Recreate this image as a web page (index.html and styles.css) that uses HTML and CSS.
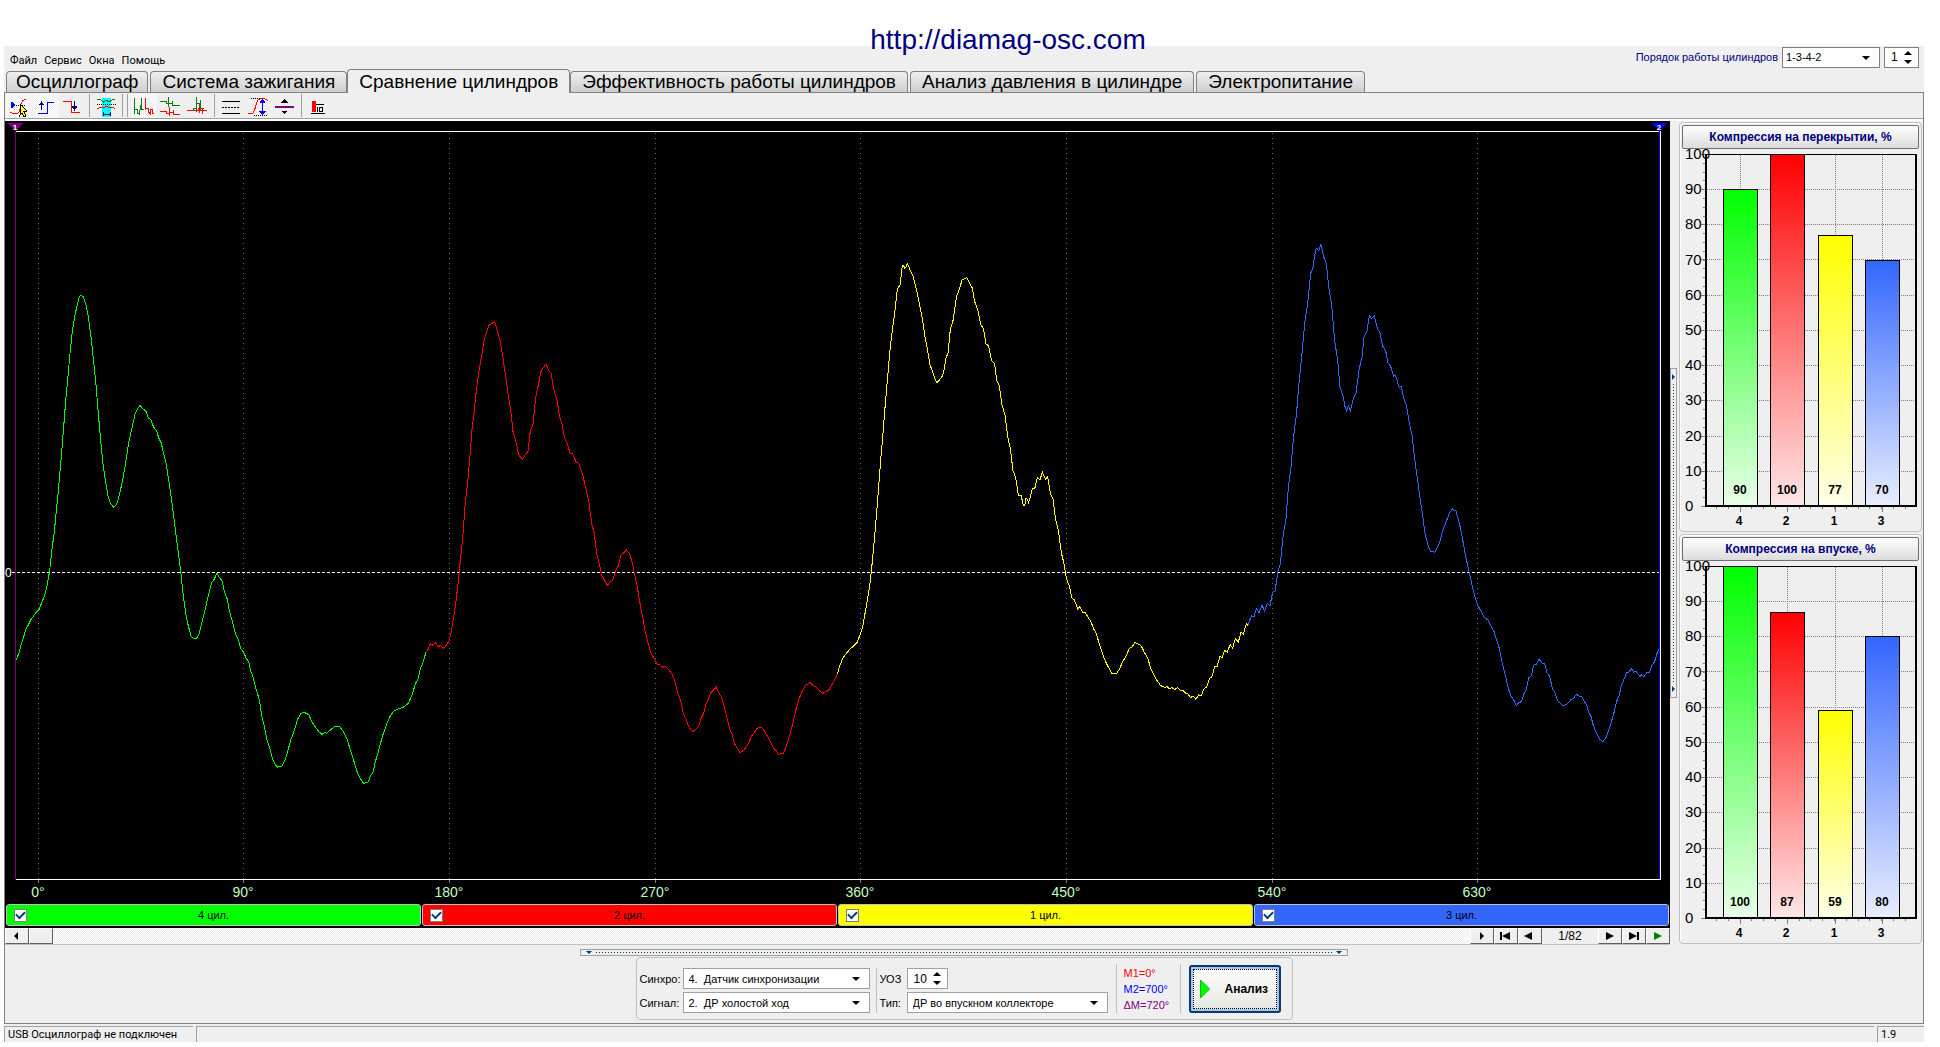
FILE: index.html
```html
<!DOCTYPE html>
<html lang="ru">
<head>
<meta charset="utf-8">
<title>Сравнение цилиндров</title>
<link rel="stylesheet" href="styles.css">
</head>
<body>
<div class="app">
  <header class="top">
    <nav class="menu">
      <a href="#">Файл</a><a href="#">Сервис</a><a href="#">Окна</a><a href="#">Помощь</a>
    </nav>
    <a class="site" href="#">http://diamag-osc.com</a>
    <div class="order">
      <label for="order">Порядок работы цилиндров</label>
      <span class="combo order-combo"><select id="order"><option>1-3-4-2</option></select></span>
      <span class="spin order-spin"><input type="text" value="1" aria-label="Номер цилиндра"></span>
    </div>
  </header>

  <div class="tabs" role="tablist">
    <button class="tab" role="tab">Осциллограф</button>
    <button class="tab" role="tab">Система зажигания</button>
    <button class="tab active" role="tab" aria-selected="true">Сравнение цилиндров</button>
    <button class="tab" role="tab">Эффективность работы цилиндров</button>
    <button class="tab" role="tab">Анализ давления в цилиндре</button>
    <button class="tab" role="tab">Электропитание</button>
  </div>

  <main class="page">
    <div class="toolbar">
      <button class="tool pressed" aria-label="Синхронизация по курсору"><svg viewBox="18 160 78 72">
        <g fill="none" stroke-width="3"><path stroke="#f00" d="M31 215q10 6 22 4q8-8 9-26q2-14 16-18"/><path stroke="#000" stroke-dasharray="3 3" d="M48 193h30"/></g>
        <path fill="#00f" d="M33 182l15 11l-15 11z"/><path fill="#ff0" stroke="#000" stroke-width="3" d="M61 192l20 19l-9 2l6 13l-6 3l-6-12l-6 7z"/></svg></button>
      <button class="tool pressed" aria-label="Фронт"><svg viewBox="99 160 78 72">
        <g fill="none" stroke="#000080" stroke-width="3"><path d="M124.500 208v-18"/><path stroke="#00f" d="M115 218.500h27.500v-34h20"/></g><path fill="#000080" d="M124.500 181l8 13h-16z"/></svg></button>
      <button class="tool" aria-label="Спад"><svg viewBox="180 160 78 72">
        <g fill="none" stroke="#f00" stroke-width="3"><path d="M189 182.500h26.500v32h25"/><path stroke="#000080" d="M223.500 180v20"/></g><path fill="#000080" d="M215 197h17l-8.500 13z"/></svg></button>
      <i class="sep"></i>
      <button class="tool" aria-label="Наложение"><svg viewBox="280 160 78 72">
        <path fill="#0ff" d="M308 171h26v57h-26z"/><g fill="none" stroke-width="3"><path stroke="green" d="M293 176.500h9l10 8l8-6l8 6l10-8h9"/><path stroke="#000" stroke-dasharray="3 3" d="M293 191.500h55"/><path stroke="#f00" d="M293 205l9-6l9 3l9-6l9 6l9-3l9 6"/><path stroke="#000080" d="M311.500 214v12M332.500 214v12M311 221.500h20"/></g></svg></button>
      <i class="sep double"></i>
      <button class="tool pressed" aria-label="Последовательно"><svg viewBox="391 160 78 72">
        <g fill="none" stroke-width="3"><path stroke="green" d="M401.500 171v49M401.500 205.500h9v12l5 3l7-36v-14M422.500 184v22h6"/><path stroke="#f00" d="M434.500 171v37M434.500 184.500v20h9v10l5 5v-12h6v12h4"/></g></svg></button>
      <button class="tool" aria-label="Раздельно"><svg viewBox="471 160 78 72">
        <g fill="none" stroke-width="3"><path stroke="green" d="M477 182.500h20v5h6v-18v29M503 189.500h12v-9M515.500 180v13h22"/><path stroke="#f00" d="M477 212.500h18v5h9v-18M506.500 213v12M506 216.500h11v-10M517.500 207v14h20"/></g></svg></button>
      <button class="tool" aria-label="Совмещённо"><svg viewBox="552 160 78 72">
        <g fill="none" stroke-width="3"><path stroke="green" d="M558 208.500h20v-6h8v-33v45M586 188.500h13v-9M599.500 178v30h18"/><path stroke="#f00" d="M558 210.500h18M580 210.500h11v-9M595.500 190v28M598 202.500h10M604.500 203v16M608 209.500h10"/></g></svg></button>
      <i class="sep"></i>
      <button class="tool" aria-label="Уровни"><svg viewBox="654 160 78 72">
        <g fill="none" stroke="#000" stroke-width="3"><path d="M666 182.500h54M666 218.500h54"/><path stroke-dasharray="6 3" d="M666 200.500h54"/></g></svg></button>
      <button class="tool" aria-label="Амплитуда"><svg viewBox="735 160 78 72">
        <g fill="none" stroke-width="3"><path stroke="#f00" d="M745 217q9 6 16-2q4-10 8-26q6-19 20-16q9 1 14 7"/><path stroke="#000" stroke-dasharray="3 3" d="M753 173.500h30M762 224.500h40"/><path stroke="#00f" d="M787.500 182v36"/></g><path fill="#00f" d="M787.500 175l10 12h-20zM787.500 224l10-12h-20z"/></svg></button>
      <button class="tool" aria-label="Смещение"><svg viewBox="816 160 78 72">
        <path stroke="purple" stroke-width="6" d="M825 199h57"/><path d="M853.500 176l10 10h-20zM853.500 221l10-10h-20z"/></svg></button>
      <i class="sep"></i>
      <button class="tool" aria-label="Диаграмма"><svg viewBox="919 160 78 72">
        <path fill="#f00" d="M939 182h12v33h-12z"/><path fill="none" stroke="#000" stroke-width="3" d="M937 218.500h41M951 191.500h26M956.500 199v15M962.500 200.500h10v12h-10z"/></svg></button>
    </div>

    <div class="work">
      <section class="scope">
        <svg class="plot" viewBox="0 0 1665 782" shape-rendering="crispEdges">
          <rect width="1665" height="782" fill="#000"/>
          <path stroke="#6a6a6a" stroke-dasharray="1 4" d="M33.500 12V758M238.500 12V758M444.500 12V758M650.500 12V758M855.500 12V758M1061.500 12V758M1267.500 12V758M1472.500 12V758"/>
          <path stroke="#808080" d="M33.500 759v3M238.500 759v3M444.500 759v3M650.500 759v3M855.500 759v3M1061.500 759v3M1267.500 759v3M1472.500 759v3"/>
          <path stroke="#fff" stroke-dasharray="3 2" d="M7 451.500H1654"/>
          <g class="wave">
            <polyline stroke="#0f0" transform="translate(-5 139) scale(.33333 .35714)" points="48,1121 56,1103 64,1075 78,1034 93,1007 108,987 117,979 134,939 142,908 149,870 156,810 163,760 169,703 176,635 183,560 190,480 197,395 203,335 210,262 217,200 224,158 232,125 238,104 243,98 250,103 258,125 265,160 273,215 281,285 288,350 295,430 302,505 309,570 317,622 324,660 332,682 341,692 350,684 357,662 366,625 375,580 386,512 396,470 405,432 412,418 420,407 428,416 438,424 445,442 453,448 461,468 470,478 476,498 484,513 490,540 498,568 505,610 513,660 520,710 528,770 535,820 543,880 550,940 557,988 565,1025 573,1052 580,1059 590,1059 597,1048 606,1015 615,980 625,940 635,903 643,893 651,877 658,889 666,898 673,928 682,950 688,982 698,1015 706,1045 716,1065 721,1086 732,1100 738,1115 746,1125 752,1150 760,1170 768,1200 778,1232 785,1275 793,1305 801,1345 810,1370 818,1398 826,1414 833,1420 845,1418 854,1402 862,1380 872,1345 884,1315 893,1285 903,1270 912,1266 926,1273 936,1293 947,1309 958,1322 966,1328 974,1323 980,1325 990,1317 1003,1307 1018,1305 1031,1322 1041,1340 1052,1375 1063,1407 1072,1435 1082,1453 1091,1466 1104,1462 1111,1446 1119,1434 1126,1405 1137,1370 1147,1334 1159,1302 1171,1276 1182,1263 1198,1256 1212,1251 1225,1241 1238,1214 1246,1186 1255,1172 1261,1145 1270,1124 1278,1098"/>
            <polyline stroke="#f00" transform="translate(395 139) scale(.33333 .35714)" points="78,1098 84,1091 91,1074 97,1079 106,1071 114,1082 122,1080 131,1087 140,1078 147,1066 154,1040 161,1000 168,955 175,900 181,840 188,780 195,690 202,630 209,560 216,475 223,420 229,365 237,310 245,268 253,222 262,196 268,181 277,177 284,172 291,195 300,225 309,275 317,325 324,375 332,420 339,480 347,505 356,545 367,558 376,545 384,535 391,478 399,460 407,385 415,350 423,312 431,300 438,291 445,308 453,317 461,362 471,392 479,440 486,460 494,500 501,512 511,543 518,543 528,565 537,571 549,605 559,645 567,680 575,738 582,762 590,822 599,855 605,882 615,900 623,911 630,901 637,898 647,870 655,857 663,826 670,821 679,812 689,823 697,848 703,877 711,910 718,952 726,990 735,1038 744,1072 754,1104 763,1115 771,1131 779,1133 788,1140 796,1138 806,1147 815,1158 824,1178 833,1212 842,1234 850,1270 858,1286 866,1307 878,1321 889,1313 896,1306 903,1284 911,1269 919,1240 925,1230 932,1212 941,1204 949,1196 956,1212 963,1221 970,1240 979,1274 989,1313 996,1328 1003,1354 1012,1367 1020,1379 1032,1372 1044,1356 1054,1334 1064,1322 1070,1312 1082,1308 1090,1314 1100,1330 1110,1346 1120,1366 1128,1373 1135,1384 1150,1381 1160,1360 1168,1333 1178,1300 1187,1262 1197,1230 1206,1208 1216,1192 1230,1183 1240,1192 1250,1197 1259,1207 1268,1214 1276,1209 1285,1206 1294,1192 1303,1178 1312,1158"/>
            <polyline stroke="#ff0" transform="translate(815 109) scale(.33333)" points="52,1332 60,1305 70,1282 79,1270 90,1257 101,1248 112,1236 121,1212 128,1192 136,1145 143,1105 150,1060 155,1015 162,940 169,860 176,770 182,690 189,610 196,520 203,440 210,360 217,300 224,250 231,185 234,174 240,165 247,107 251,107 254,115 258,112 262,100 265,106 270,120 278,135 286,165 293,195 300,230 307,265 314,315 322,355 330,405 337,422 344,444 351,458 358,450 367,438 371,428 377,388 384,368 391,298 399,272 410,198 418,178 426,150 434,146 441,143 448,158 457,174 464,215 473,238 482,284 490,295 498,342 506,348 514,390 524,402 530,450 538,468 546,524 555,555 563,620 571,655 579,722 587,742 595,796 603,795 610,826 614,828 618,804 622,808 626,818 632,796 637,776 644,777 652,742 660,750 667,726 676,747 683,740 691,790 699,808 707,870 715,900 724,968 733,1005 739,1045 748,1068 755,1103 763,1110 773,1136 779,1130 788,1147 795,1146 806,1165 812,1172 820,1195 828,1208 836,1235 850,1278 860,1302 869,1318 875,1330 890,1330 898,1318 908,1295 918,1278 928,1256 937,1250 945,1238 956,1243 964,1248 972,1265 983,1285 993,1316 1008,1347 1022,1367 1034,1372 1042,1370 1048,1377 1056,1373 1064,1379 1073,1373 1082,1381 1090,1382 1098,1390 1104,1392 1112,1403 1119,1398 1128,1408 1136,1394 1143,1398 1153,1375 1160,1372 1169,1344 1175,1342 1185,1308 1191,1310 1200,1279 1206,1283 1214,1261 1222,1267 1230,1244 1238,1254 1246,1226 1255,1236 1263,1207 1270,1213 1279,1181 1284,1186"/>
            <polyline stroke="#36f" transform="translate(1195 109) scale(.33333 .35714)" points="144,1107 154,1080 162,1084 169,1060 177,1071 186,1051 194,1067 202,1045 210,1052 218,1014 225,1012 234,955 241,935 250,850 258,810 265,720 273,665 281,575 289,520 297,430 305,355 314,262 323,205 332,122 339,103 347,55 350,51 356,58 363,41 370,72 379,95 387,165 395,210 404,310 413,365 420,440 429,465 435,494 440,506 445,492 451,505 459,475 468,456 477,392 486,355 492,300 501,283 508,240 515,248 523,240 532,276 540,288 548,325 557,338 564,372 572,382 581,409 587,408 597,440 604,439 611,472 619,490 628,540 636,575 644,640 652,695 660,750 668,800 676,855 686,888 692,900 705,902 711,890 718,877 727,845 738,818 748,793 757,781 768,787 775,810 785,850 795,905 805,948 814,985 824,1025 833,1050 842,1066 853,1085 864,1092 872,1108 882,1124 890,1148 898,1172 905,1206 915,1243 925,1284 933,1305 942,1317 949,1332 956,1323 964,1321 972,1298 979,1287 986,1254 994,1248 1001,1219 1010,1215 1017,1202 1025,1212 1034,1215 1041,1240 1049,1250 1057,1284 1065,1296 1073,1318 1081,1326 1090,1332 1103,1326 1112,1316 1122,1310 1129,1300 1138,1305 1145,1306 1153,1320 1160,1330 1166,1350 1173,1362 1180,1388 1189,1408 1198,1425 1209,1433 1220,1418 1230,1390 1241,1355 1250,1320 1257,1305 1264,1276 1272,1258 1280,1240 1287,1238 1294,1228 1301,1238 1308,1236 1320,1250 1325,1246 1332,1251 1340,1240 1349,1238 1356,1218 1364,1209 1370,1188 1377,1173"/>
          </g>
          <path fill="none" stroke="#fff" d="M11 10.500H1655.500V758.500H11"/>
          <path stroke="purple" d="M10.500 8V758"/><path fill="purple" d="M3 2h15l-7 8h-1z"/>
          <path stroke="#00f" d="M1654.500 8V758"/><path fill="#00f" d="M1647 2h15l-7 8h-1z"/>
          <g class="marks"><text x="10" y="9">1</text><text x="1654" y="9">2</text></g>
          <text class="zero" x="0" y="456">0</text>
          <g class="degrees"><text x="33" y="776">0°</text><text x="238" y="776">90°</text><text x="444" y="776">180°</text><text x="650" y="776">270°</text><text x="855" y="776">360°</text><text x="1061" y="776">450°</text><text x="1267" y="776">540°</text><text x="1472" y="776">630°</text></g>
        </svg>
        <div class="cylinders">
          <label class="cyl green"><input type="checkbox" checked><span>4 цил.</span></label>
          <label class="cyl red"><input type="checkbox" checked><span>2 цил.</span></label>
          <label class="cyl yellow"><input type="checkbox" checked><span>1 цил.</span></label>
          <label class="cyl blue"><input type="checkbox" checked><span>3 цил.</span></label>
        </div>
        <div class="scroll">
          <button class="sb" aria-label="Влево"><svg viewBox="0 0 22 14"><path d="M12 3v8L8 7z"/></svg></button>
          <button class="sb" aria-label="Ползунок"></button>
          <i class="track"></i>
          <button class="sb" aria-label="Вправо"><svg viewBox="0 0 22 14"><path d="M9 3v8l4-4z"/></svg></button>
          <button class="sb" aria-label="В начало"><svg viewBox="0 0 22 14"><path d="M5 3h2v8H5zM15 3v8L7 7z"/></svg></button>
          <button class="sb" aria-label="Назад"><svg viewBox="0 0 22 14"><path d="M13 3v8L5 7z"/></svg></button>
          <span class="frame">1/82</span>
          <button class="sb" aria-label="Вперёд"><svg viewBox="0 0 22 14"><path d="M7 3v8l8-4z"/></svg></button>
          <button class="sb" aria-label="В конец"><svg viewBox="0 0 22 14"><path d="M6 3v8l8-4zM14 3h2v8h-2z"/></svg></button>
          <button class="sb" aria-label="Пуск"><svg viewBox="0 0 22 14"><path fill="green" d="M7 3v8l8-4z"/></svg></button>
        </div>
      </section>

      <div class="vsplit"><span class="grip"><i></i><b></b><i></i></span></div>

      <aside class="side">
        <svg class="defs" aria-hidden="true"><defs>
          <linearGradient id="g4" x2="0" y2="1"><stop stop-color="#0f0"/><stop offset="1" stop-color="#e8ffe8"/></linearGradient>
          <linearGradient id="g2" x2="0" y2="1"><stop stop-color="#f00"/><stop offset="1" stop-color="#ffe6e6"/></linearGradient>
          <linearGradient id="g1" x2="0" y2="1"><stop stop-color="#ff0"/><stop offset="1" stop-color="#ffffe8"/></linearGradient>
          <linearGradient id="g3" x2="0" y2="1"><stop stop-color="#36f"/><stop offset="1" stop-color="#e8eeff"/></linearGradient>
          <g id="grid">
            <g fill="none" stroke="#808080"><path stroke-dasharray="1 1" d="M25 40.500h208M25 75.500h208M25 110.500h208M25 146.500h208M25 181.500h208M25 216.500h208M25 251.500h208M25 287.500h208M25 322.500h208M58.500 6v350M105.500 6v350M153.500 6v350M200.500 6v350"/>
            <path d="M19 5.500h4M19 40.500h4M19 75.500h4M19 110.500h4M19 146.500h4M19 181.500h4M19 216.500h4M19 251.500h4M19 287.500h4M19 322.500h4M19 357.500h4M58.500 358v5M105.500 358v5M153.500 358v5M200.500 358v5"/>
            <path stroke-width="2" stroke-dasharray="1 7.800" d="M22 5v352"/><path stroke-width="2" stroke-dasharray="1 10.800" d="M34 359h192"/></g>
          </g>
          <path id="frame" d="M23 5h212v353h-212zM25 6v350h208V6z" fill-rule="evenodd"/>
          <g id="scale" class="scale"><text x="3" y="10">100</text><text x="3" y="45">90</text><text x="3" y="80">80</text><text x="3" y="116">70</text><text x="3" y="151">60</text><text x="3" y="186">50</text><text x="3" y="221">40</text><text x="3" y="256">30</text><text x="3" y="292">20</text><text x="3" y="327">10</text><text x="3" y="362">0</text></g>
        </defs></svg>
        <section class="group">
          <button class="head">Компрессия на перекрытии, %</button>
          <svg class="bars" viewBox="0 0 237 381" shape-rendering="crispEdges">
            <use href="#grid"/>
            <g stroke="#000"><path fill="url(#g4)" d="M41.500 356.500V40.500h34v316z"/><path fill="url(#g2)" d="M88.500 356.500V5.500h34v351z"/><path fill="url(#g1)" d="M136.500 356.500V86.500h34v270z"/><path fill="url(#g3)" d="M183.500 356.500V111.500h34v245z"/></g>
            <use href="#frame"/><use href="#scale"/>
            <g class="val"><text x="58" y="345">90</text><text x="105" y="345">100</text><text x="153" y="345">77</text><text x="200" y="345">70</text><text x="57" y="376">4</text><text x="104" y="376">2</text><text x="152" y="376">1</text><text x="199" y="376">3</text></g>
          </svg>
        </section>
        <section class="group">
          <button class="head">Компрессия на впуске, %</button>
          <svg class="bars" viewBox="0 0 237 381" shape-rendering="crispEdges">
            <use href="#grid"/>
            <g stroke="#000"><path fill="url(#g4)" d="M41.500 356.500V5.500h34v351z"/><path fill="url(#g2)" d="M88.500 356.500V51.500h34v305z"/><path fill="url(#g1)" d="M136.500 356.500V149.500h34v207z"/><path fill="url(#g3)" d="M183.500 356.500V75.500h34v281z"/></g>
            <use href="#frame"/><use href="#scale"/>
            <g class="val"><text x="58" y="345">100</text><text x="105" y="345">87</text><text x="153" y="345">59</text><text x="200" y="345">80</text><text x="57" y="376">4</text><text x="104" y="376">2</text><text x="152" y="376">1</text><text x="199" y="376">3</text></g>
          </svg>
        </section>
      </aside>
    </div>

    <div class="hsplit"><i></i><b></b><i></i></div>

    <form class="controls">
      <div class="fields">
        <label for="sync">Синхро:</label>
        <span class="combo"><select id="sync"><option>4.&nbsp; Датчик синхронизации</option></select></span>
        <label for="signal">Сигнал:</label>
        <span class="combo"><select id="signal"><option>2.&nbsp; ДР холостой ход</option></select></span>
      </div>
      <div class="fields type">
        <label for="uoz">УОЗ</label>
        <span class="spin uoz"><input id="uoz" type="text" value="10"></span>
        <label for="type">Тип:</label>
        <span class="combo"><select id="type"><option>ДР во впускном коллекторе</option></select></span>
      </div>
      <div class="markers"><span class="m1">M1=0°</span><span class="m2">M2=700°</span><span class="dm">ΔM=720°</span></div>
      <button type="button" class="run"><svg viewBox="0 0 10 20"><path fill="#0f0" stroke="#00c000" d="M.5 1l9 9l-9 9z"/></svg>Анализ</button>
    </form>
  </main>

  <footer class="status"><span class="cell device">USB Осциллограф не подключен</span><span class="cell info"></span><span class="cell version">1.9</span></footer>
</div>
</body>
</html>
```
FILE: styles.css
```css
* { box-sizing: border-box; }
body { margin: 0; background: #fff; color: #000; font: 11px/14px "Liberation Sans", Arial, sans-serif; }
button, input, select { font: inherit; color: inherit; margin: 0; padding: 0; border-radius: 0; }
svg { display: block; }
a { color: inherit; text-decoration: none; }
i, b { display: block; }

.app { margin: 0 16px 0 4px; padding-bottom: 4px; }

.top { display: grid; grid-template-columns: 1fr auto 1fr; height: 70px; background: linear-gradient(#fff 46px, #efefef 46px); }
.menu { display: flex; gap: 7px; padding: 54px 0 0 6px; font: 11px/14px Roboto, Tahoma, sans-serif; }
.site { color: navy; font-size: 28px; line-height: 32px; padding: 24px 0 0 88px; }
.order { display: flex; align-items: center; justify-content: flex-end; gap: 4px; height: 20px; margin: 47px 5px 0 0; color: navy; }

.combo, .spin { position: relative; display: block; height: 21px; background: #fff; border: 1px solid #808080; color: #000; }
.spin { font-size: 12px; }
.combo select, .spin input { display: block; width: 100%; height: 100%; padding-left: 5px; border: 0; background: transparent; appearance: none; outline: 0; }
.spin input { padding-left: 6px; }
.combo::after { content: ""; position: absolute; right: 9px; top: 8px; border: 4px solid transparent; border-top-color: #000; border-bottom: 0; pointer-events: none; }
.spin::before, .spin::after { content: ""; position: absolute; right: 6px; border: 4px solid transparent; }
.spin::before { top: 3px; border-bottom-color: #000; border-top: 0; }
.spin::after { bottom: 3px; border-top-color: #000; border-bottom: 0; }
.order-combo { width: 98px; }
.order-combo select { padding-left: 3px; }
.order-spin { width: 35px; }

.tabs { display: flex; align-items: flex-end; gap: 2px; height: 22px; padding-left: 2px; background: #efefef; }
.tab { height: 21px; padding: 0 11px; border: 1px solid #808080; border-bottom: 0; border-radius: 4px 4px 0 0; background: linear-gradient(#efefef, #cfcfcf); font-size: 19px; line-height: 20px; white-space: nowrap; }
.tab:first-child { padding: 0 9px; }
.tab.active { height: 24px; margin: 0 -2px -1px; background: #efefef; line-height: 18px; position: relative; z-index: 1; }

.page { background: #efefef; border: 1px solid #808080; padding-bottom: 3px; }
.toolbar { display: flex; align-items: center; gap: 1px; height: 26px; padding-left: 1px; border-bottom: 1px solid #a0a0a0; }
.tool { width: 26px; height: 25px; border: 0; background: none; }
.tool svg { width: 26px; height: 24px; shape-rendering: crispEdges; }
.pressed { background: repeating-conic-gradient(#fff 0 25%, #efefef 0 50%) 0 0 / 2px 2px; }
.sep { width: 1px; height: 23px; margin: 0 2px; background: #a0a0a0; }
.double { width: 6px; background: none; border: solid #a0a0a0; border-width: 0 1px; }

.work { display: grid; grid-template-columns: minmax(0, 1fr) 9px 244px; align-items: start; border-top: 2px solid #fff; }
.plot { width: 100%; height: auto; }
.wave polyline { fill: none; vector-effect: non-scaling-stroke; }
.marks { fill: #fff; font-size: 8px; font-weight: bold; text-anchor: middle; }
.zero { fill: #fff; font-size: 12px; }
.degrees { fill: #c0ffc0; font-size: 14px; text-anchor: middle; }

.cylinders { display: grid; grid-template-columns: repeat(4, 1fr); gap: 1px; padding: 1px 1px 2px; background: #000; }
.cyl { display: flex; align-items: center; height: 22px; padding: 0 7px; border: 1px solid #c0c0c0; border-radius: 3px; }
.cyl span { flex: 1; text-align: center; padding-right: 13px; }
.cyl input { appearance: none; width: 13px; height: 13px; border: 1px solid #808080; background: #fff; display: grid; place-items: center; }
.cyl input:checked::before { content: ""; width: 7px; height: 4px; border: solid #003c74; border-width: 0 0 2px 2px; rotate: -45deg; margin-bottom: 2px; }
.green { background: #0f0; }
.red { background: #f00; }
.yellow { background: #ff0; }
.blue { background: #36f; }

.scroll { display: flex; height: 17px; border-bottom: 1px solid #c0c0c0; background: #efefef; }
.sb { width: 24px; height: 16px; border: 1px solid; border-color: #fff #606060 #606060 #fff; background: #efefef; }
.sb svg { width: 22px; height: 14px; }
.track { flex: 1; background: repeating-conic-gradient(#fff 0 25%, #efefef 0 50%) 0 0 / 2px 2px; }
.frame { width: 56px; text-align: center; font-size: 12px; line-height: 17px; }

.vsplit { align-self: center; }
.grip { display: flex; flex-direction: column; align-items: center; justify-content: space-between; width: 7px; height: 330px; padding: 5px 0; border: 1px solid #a0a0a0; }
.grip i { border: 3px solid transparent; border-left-color: #003c74; border-right: 0; }
.grip b { flex: 1; width: 1px; margin: 4px 0; background: repeating-linear-gradient(#003c74 0 1px, transparent 1px 3px); }
.hsplit { display: flex; align-items: center; justify-content: space-between; width: 40%; height: 7px; margin: 4px auto 0; padding: 0 5px; border: 1px solid #a0a0a0; }
.hsplit i { border: 3px solid transparent; border-top-color: #003c74; border-bottom: 0; }
.hsplit b { flex: 1; height: 1px; margin: 0 4px; background: repeating-linear-gradient(90deg, #003c74 0 1px, transparent 1px 3px); }

.side { display: grid; gap: 2px; padding-top: 1px; }
.defs { position: absolute; width: 0; height: 0; }
.group { height: 410px; margin: 0 1px 0 0; padding: 2px; border: 1px solid #c0c0c0; border-radius: 4px; box-shadow: inset 1px 1px #fff; }
.head { display: block; width: 100%; height: 24px; border: 1px solid #707070; border-radius: 2px; background: linear-gradient(#fff, #dcdcdc); color: navy; font-size: 12px; font-weight: bold; }
.bars { width: 237px; height: 381px; }
.scale { font-size: 15px; }
.val { font-size: 12px; font-weight: bold; text-anchor: middle; }

.controls { display: flex; align-items: center; width: max-content; height: 63px; margin: 1px auto 0; padding: 0 11px 0 3px; border: 1px solid #c0c0c0; border-radius: 4px; }
.fields { display: grid; grid-template-columns: 43px 187px; align-items: center; row-gap: 3px; padding-right: 6px; margin-top: 4px; }
.fields .combo, .fields .spin { border-color: #a0a0a0; }
.type { grid-template-columns: 27px 201px; padding: 0 8px 0 3px; border-left: 1px solid #c0c0c0; }
.uoz { width: 41px; }
.markers { display: grid; align-content: center; height: 50px; width: 65px; padding-left: 7px; border: solid #c0c0c0; border-width: 0 1px; line-height: 16px; }
.m1 { color: #f00; }
.m2 { color: #00f; }
.dm { color: purple; }
.run { display: flex; align-items: center; gap: 15px; width: 92px; height: 48px; margin-left: 8px; padding-left: 9px; border: 2px solid #003c74; border-radius: 3px; outline: 1px dotted #000; outline-offset: -5px; background: linear-gradient(#fff, #e6e6e0); box-shadow: inset 0 0 0 2px #a9c4e6; font-size: 12px; font-weight: bold; }
.run svg { width: 10px; height: 20px; }

.status { display: flex; gap: 3px; height: 18px; padding-top: 2px; background: #efefef; font: 11px/16px Roboto, Tahoma, sans-serif; }
.cell { border: solid #a0a0a0; border-width: 1px 0 0 1px; padding-left: 3px; }
.device { width: 189px; }
.info { flex: 1; }
.version { width: 47px; }
```
